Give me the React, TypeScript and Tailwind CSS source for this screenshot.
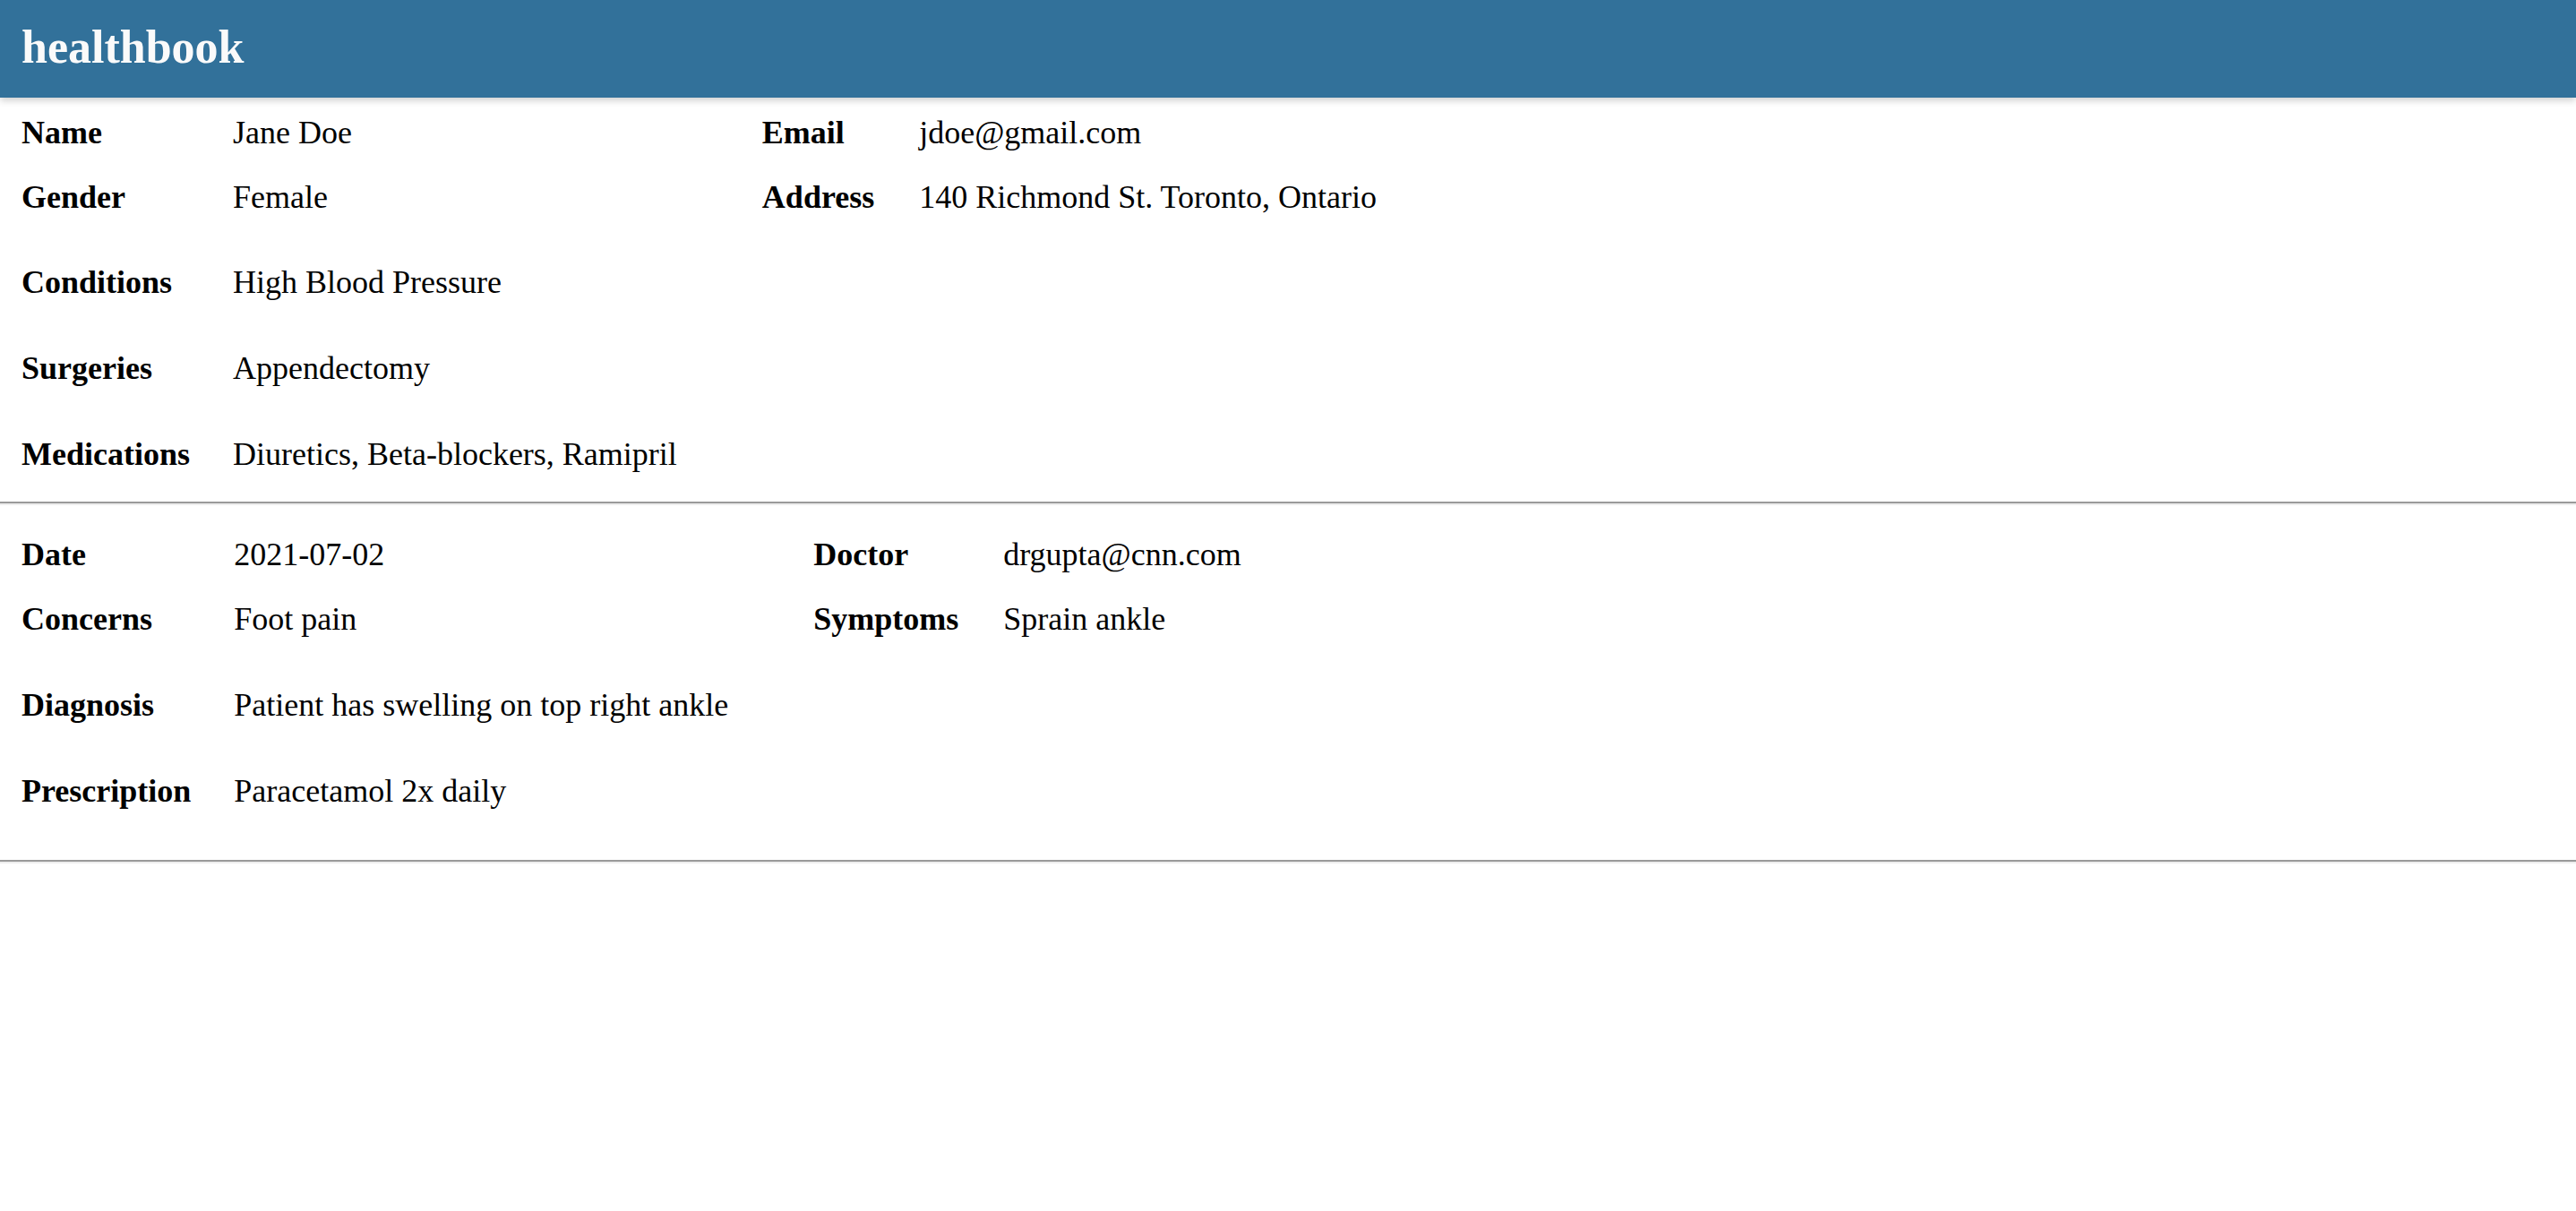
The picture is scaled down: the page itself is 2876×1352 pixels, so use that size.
import React from "react";

type Row = { label: string; value: string; label2?: string; value2?: string };

function Section({
  rows,
  rowsClass,
}: {
  rows: Row[];
  rowsClass: string;
}) {
  return (
    <section className={`grid grid-cols-[auto_auto_auto_1fr] pl-6 text-[36px] ${rowsClass}`}>
      {rows.map((r, i) => {
        const lead = r.label2 !== undefined ? "leading-[72px]" : "leading-[96px]";
        return (
          <React.Fragment key={i}>
            <div className={`col-start-1 pt-[2px] pr-12 font-bold whitespace-nowrap ${lead}`}>{r.label}</div>
            <div className={`pt-[2px] pr-[95px] whitespace-nowrap ${lead}`}>{r.value}</div>
            {r.label2 !== undefined && (
              <>
                <div className={`pt-[2px] pr-[50px] font-bold whitespace-nowrap ${lead}`}>{r.label2}</div>
                <div className={`pt-[2px] whitespace-nowrap ${lead}`}>{r.value2}</div>
              </>
            )}
          </React.Fragment>
        );
      })}
    </section>
  );
}

function Rule({ className }: { className: string }) {
  return (
    <div
      className={`border-t-2 border-b-2 border-t-[#9a9a9a] border-b-[#eeeeee] ${className}`}
    />
  );
}

export default function App() {
  const profile: Row[] = [
    { label: "Name", value: "Jane Doe", label2: "Email", value2: "jdoe@gmail.com" },
    { label: "Gender", value: "Female", label2: "Address", value2: "140 Richmond St. Toronto, Ontario" },
    { label: "Conditions", value: "High Blood Pressure" },
    { label: "Surgeries", value: "Appendectomy" },
    { label: "Medications", value: "Diuretics, Beta-blockers, Ramipril" },
  ];
  const visit: Row[] = [
    { label: "Date", value: "2021-07-02", label2: "Doctor", value2: "drgupta@cnn.com" },
    { label: "Concerns", value: "Foot pain", label2: "Symptoms", value2: "Sprain ankle" },
    { label: "Diagnosis", value: "Patient has swelling on top right ankle" },
    { label: "Prescription", value: "Paracetamol 2x daily" },
  ];

  return (
    <div className="min-h-[1352px] w-full overflow-hidden bg-white text-black font-['Liberation_Serif','Times_New_Roman',serif]">
      <header className="relative z-10 h-[109px] bg-[#32719a] pl-6 text-[52px] font-bold leading-[105px] text-[#fafafa] shadow-[0_3px_8px_rgba(0,0,0,0.2)]">
        healthbook
      </header>
      <Section rows={profile} rowsClass="pt-px grid-rows-[72px_83px_96px_96px_96px]" />
      <Rule className="mt-[7px]" />
      <Section rows={visit} rowsClass="mt-[17px] grid-rows-[72px_84px_96px_96px]" />
      <Rule className="mt-[31px]" />
    </div>
  );
}
